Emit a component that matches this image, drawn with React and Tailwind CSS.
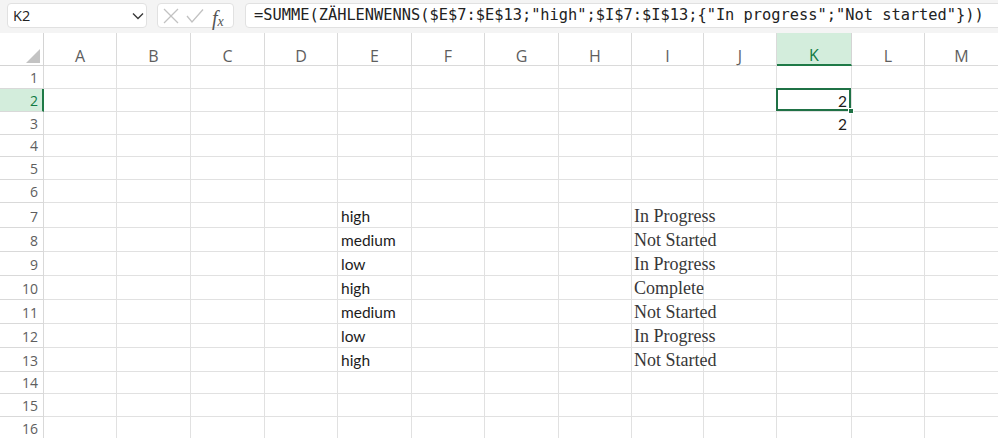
import React from "react";

const COLS = ["A", "B", "C", "D", "E", "F", "G", "H", "I", "J", "K", "L", "M"];
const GRID = "grid grid-cols-[44px_73px_74px_74px_73px_74px_73px_74px_73px_72px_73px_75px_73px_74px]";
const ROW_H = [
  "h-[23px]", "h-[23px]", "h-[23px]", "h-[22px]", "h-[23px]", "h-[23px]",
  "h-[25px]", "h-[24px]", "h-[24px]", "h-[24px]", "h-[24px]", "h-[24px]", "h-[24px]",
  "h-[22px]", "h-[23px]", "h-[23px]",
];
const E = { 7: "high", 8: "medium", 9: "low", 10: "high", 11: "medium", 12: "low", 13: "high" };
const I = { 7: "In Progress", 8: "Not Started", 9: "In Progress", 10: "Complete", 11: "Not Started", 12: "In Progress", 13: "Not Started" };

const hdrFont = { fontFamily: "'Open Sans', 'Noto Sans', sans-serif" };

function Toolbar() {
  return (
    <div className="flex h-[33px] items-start overflow-hidden bg-[#f4f4f4] pt-[3px] pl-[7px]">
      <div className="relative flex h-[25px] w-[140px] shrink-0 items-center rounded-[4px] border border-[#e1e1e1] bg-white pl-[5px]">
        <span className="text-[14.5px] text-[#222]" style={hdrFont}>K2</span>
        <svg className="absolute left-[124px] top-[8px]" width="12" height="8" viewBox="0 0 12 8">
          <polyline points="1,1.5 6,6.5 11,1.5" fill="none" stroke="#3a3a3a" strokeWidth="1.4" />
        </svg>
      </div>
      <div className="relative ml-[10px] h-[25px] w-[77px] shrink-0 rounded-[4px] border border-[#e1e1e1] bg-white">
        <svg className="absolute left-[5px] top-[4px]" width="16" height="16" viewBox="0 0 16 16">
          <line x1="1" y1="1" x2="15" y2="15" stroke="#c2c2c2" strokeWidth="1.3" />
          <line x1="15" y1="1" x2="1" y2="15" stroke="#c2c2c2" strokeWidth="1.3" />
        </svg>
        <svg className="absolute left-[28px] top-[4px]" width="18" height="16" viewBox="0 0 18 16">
          <polyline points="1,8 6,14 17,1.5" fill="none" stroke="#c2c2c2" strokeWidth="1.3" />
        </svg>
        <span className="absolute left-[54px] top-[-1px] text-[#555]" style={{ fontFamily: "'Liberation Serif', serif", fontStyle: "italic" }}>
          <span className="text-[20px]">f</span>
          <span className="relative top-[1px] text-[14px]">x</span>
        </span>
      </div>
      <div className="ml-[11px] flex h-[25px] w-[780px] shrink-0 items-center rounded-[4px] border border-[#e1e1e1] bg-white pl-[8px]">
        <span className="whitespace-pre text-[15.35px] text-[#222]" style={{ fontFamily: "'DejaVu Sans Mono', 'Liberation Mono', monospace" }}>
          {'=SUMME(ZÄHLENWENNS($E$7:$E$13;"high";$I$7:$I$13;{"In progress";"Not started"}))'}
        </span>
      </div>
    </div>
  );
}

function HeaderRow() {
  return (
    <div className={`${GRID} h-[33px] bg-white`}>
      <div className="relative border-r border-b border-[#d4d4d4]">
        <svg className="absolute left-[26px] top-[16px]" width="14" height="14" viewBox="0 0 14 14">
          <polygon points="14,0 14,14 0,14" fill="#c3c3c3" />
        </svg>
      </div>
      {COLS.map((c) =>
        c === "K" ? (
          <div key={c} className="flex items-end justify-center border-r border-b-2 border-r-[#d4d4d4] border-b-[#1f7a47] bg-[#d3eddc]">
            <span className="text-[16px] leading-[17px] text-[#117a43]" style={hdrFont}>{c}</span>
          </div>
        ) : (
          <div key={c} className="flex items-end justify-center border-r border-b border-[#dadada]">
            <span className="text-[16px] leading-[18px] text-[#5e5e5e]" style={hdrFont}>{c}</span>
          </div>
        )
      )}
    </div>
  );
}

function Row({ n }) {
  const h = ROW_H[n - 1];
  const sel = n === 2;
  return (
    <div className={`${GRID} ${h}`}>
      {sel ? (
        <div className="flex items-end justify-end border-r-2 border-b border-r-[#1f7a47] border-b-[#d9d9d9] bg-[#d3eddc] pr-[4px]">
          <span className="text-[14px] leading-[20px] text-[#117a43]" style={hdrFont}>{n}</span>
        </div>
      ) : (
        <div className="flex items-end justify-end border-r border-b border-[#d9d9d9] pr-[5px]">
          <span className="text-[14px] leading-[20px] text-[#5e5e5e]" style={hdrFont}>{n}</span>
        </div>
      )}
      {COLS.map((c) => {
        let content = null;
        if (c === "E" && E[n]) {
          content = (
            <span className="pb-[2px] pl-[3px] text-[15.5px] leading-[18px] text-[#1c1c1c]" style={{ fontFamily: "Lato, 'Liberation Sans', sans-serif" }}>
              {E[n]}
            </span>
          );
        }
        if (c === "I" && I[n]) {
          content = (
            <span className="whitespace-nowrap pb-[1px] pl-[2px] text-[18px] leading-[20px] text-[#383838]" style={{ fontFamily: "'Liberation Serif', serif" }}>
              {I[n]}
            </span>
          );
        }
        if (c === "K" && (n === 2 || n === 3)) {
          content = (
            <span className="ml-auto pr-[4px] pb-px text-[15.5px] leading-[18px] text-[#1c1c1c]" style={{ fontFamily: "Lato, 'Liberation Sans', sans-serif" }}>
              2
            </span>
          );
        }
        return (
          <div key={c} className="relative flex items-end overflow-visible border-r border-b border-[#e1e1e1]">
            {content}
            {c === "K" && n === 2 && (
              <>
                <div className="pointer-events-none absolute -left-px -top-px right-0 bottom-0 border-2 border-[#1f7145]" />
                <div className="absolute -right-[3px] -bottom-[3px] z-10 h-[6px] w-[6px] border border-white bg-[#1f7145]" />
              </>
            )}
          </div>
        );
      })}
    </div>
  );
}

export default function App() {
  return (
    <div className="h-[438px] w-[998px] overflow-hidden bg-white">
      <Toolbar />
      <HeaderRow />
      {Array.from({ length: 16 }, (_, i) => (
        <Row key={i} n={i + 1} />
      ))}
    </div>
  );
}
